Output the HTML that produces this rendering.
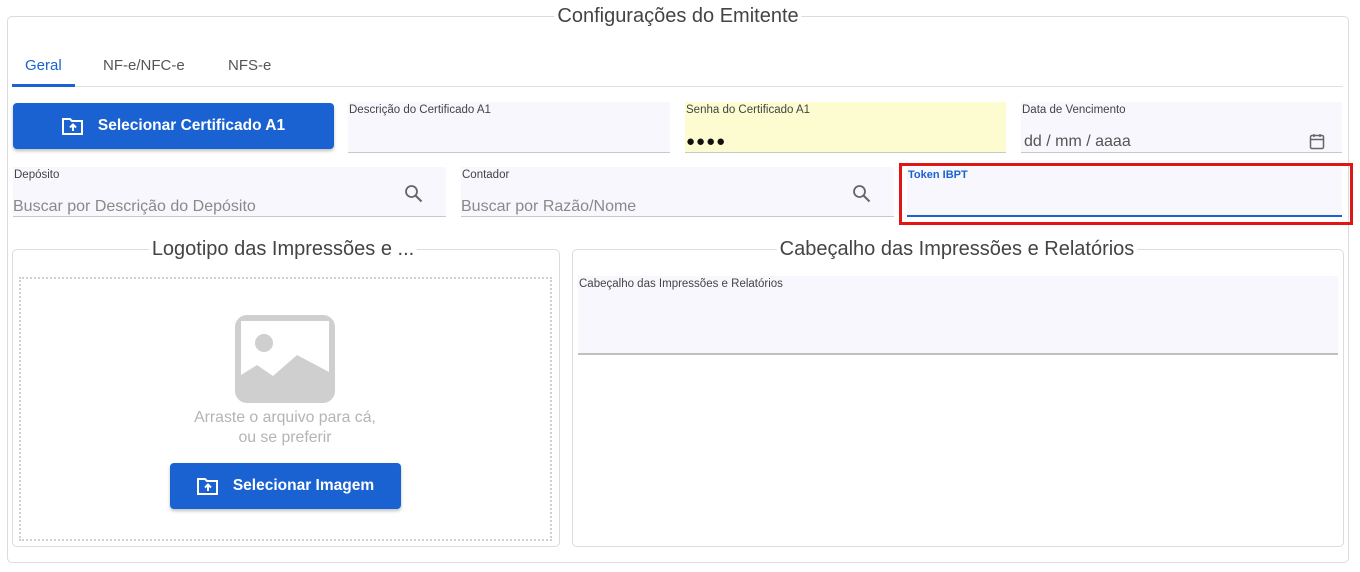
<!DOCTYPE html>
<html><head><meta charset="utf-8"><style>
*{box-sizing:border-box;margin:0;padding:0}
body{width:1360px;height:572px;background:#fff;position:relative;overflow:hidden;font-family:"Liberation Sans",sans-serif;color:#444}
.a{position:absolute}
.box{position:absolute;border:1px solid #dcdcdc;border-radius:5px}
.leg{position:absolute;background:#fff;padding:0 3px;color:#444;font-size:20px;white-space:nowrap;transform:translateX(-50%);line-height:22px}
.fld{position:absolute;background:#f7f7fd;border-bottom:1px solid #c8c8c8}
.lbl{position:absolute;left:1px;top:2px;font-size:11.5px;color:#444}
.ph{position:absolute;left:0;font-size:16px;color:#8a8a8a}
.btn{position:absolute;background:#1a62d2;border-radius:4px;color:#fff;font-size:15.5px;font-weight:bold;box-shadow:0 2px 3px rgba(0,0,0,.25);display:flex;align-items:center;justify-content:center}
</style></head><body>

<div class="box" style="left:7px;top:16px;width:1342px;height:547px"></div>
<div class="leg" style="left:678px;top:5px">Configurações do Emitente</div>

<div class="a" style="left:25px;top:57px;font-size:15px;color:#1a62d2">Geral</div>
<div class="a" style="left:103px;top:57px;font-size:15px;color:#555">NF-e/NFC-e</div>
<div class="a" style="left:228px;top:57px;font-size:15px;color:#555">NFS-e</div>
<div class="a" style="left:12px;top:86px;width:1331px;height:1px;background:#e0e0e0"></div>
<div class="a" style="left:12px;top:84px;width:63px;height:3px;background:#1a62d2"></div>

<div class="btn" style="left:13px;top:103px;width:321px;height:46px">
<svg width="22" height="18" viewBox="0 0 22 18" style="margin-right:14px"><path d="M1 2h7l2 2h10v13H1z" fill="none" stroke="#fff" stroke-width="2"/><path d="M11 14V8M8 10.5l3-3 3 3" stroke="#fff" stroke-width="2" fill="none"/></svg>Selecionar Certificado A1</div>

<div class="fld" style="left:348px;top:102px;width:322px;height:51px"><div class="lbl">Descrição do Certificado A1</div></div>
<div class="fld" style="left:685px;top:102px;width:321px;height:51px;background:#fdfbd0"><div class="lbl">Senha do Certificado A1</div><div class="a" style="left:1px;top:31px;font-size:15px;color:#111;letter-spacing:1px">●●●●</div></div>
<div class="fld" style="left:1021px;top:102px;width:321px;height:51px"><div class="lbl">Data de Vencimento</div><div class="ph" style="left:3px;top:31px;color:#555">dd / mm / aaaa</div>
<svg class="a" style="left:288px;top:31px" width="16" height="17" viewBox="0 0 16 17"><rect x="1.5" y="2.5" width="13" height="13" rx="1.5" fill="none" stroke="#666" stroke-width="1.5"/><path d="M1.5 6.5h13M5 1v3M11 1v3" stroke="#666" stroke-width="1.5"/></svg></div>

<div class="fld" style="left:13px;top:167px;width:433px;height:50px"><div class="lbl">Depósito</div><div class="ph" style="top:31px">Buscar por Descrição do Depósito</div>
<svg class="a" style="left:391px;top:17px" width="20" height="20" viewBox="0 0 20 20"><circle cx="7.5" cy="7.5" r="5.5" fill="none" stroke="#666" stroke-width="1.8"/><path d="M11.5 11.5l6 6" stroke="#666" stroke-width="2"/></svg></div>
<div class="fld" style="left:461px;top:167px;width:433px;height:50px"><div class="lbl">Contador</div><div class="ph" style="top:31px">Buscar por Razão/Nome</div>
<svg class="a" style="left:391px;top:17px" width="20" height="20" viewBox="0 0 20 20"><circle cx="7.5" cy="7.5" r="5.5" fill="none" stroke="#666" stroke-width="1.8"/><path d="M11.5 11.5l6 6" stroke="#666" stroke-width="2"/></svg></div>
<div class="fld" style="left:907px;top:167px;width:435px;height:50px;border-bottom:2px solid #1a62d2"><div class="lbl" style="color:#1a62d2;font-weight:bold;font-size:11px">Token IBPT</div></div>
<div class="a" style="left:899px;top:163px;width:454px;height:62px;border:3px solid #e01515"></div>

<div class="box" style="left:12px;top:249px;width:548px;height:298px"></div>
<div class="leg" style="left:283px;top:238px">Logotipo das Impressões e ...</div>
<div class="a" style="left:19px;top:277px;width:533px;height:264px;border:2px dotted #d0d0d0"></div>
<svg class="a" style="left:235px;top:315px" width="100" height="88" viewBox="0 0 100 88"><rect x="0" y="0" width="100" height="88" rx="12" fill="#cfcfcf"/><rect x="6" y="6" width="88" height="60" fill="#fff"/><circle cx="29" cy="28" r="9" fill="#cfcfcf"/><path d="M6 66L6 60L22 50L38 61L62 40L94 57V76H6z" fill="#cfcfcf"/></svg>
<div class="a" style="left:150px;top:408px;width:270px;text-align:center;font-size:15.8px;color:#b4b4b4;line-height:20px">Arraste o arquivo para cá,<br>ou se preferir</div>
<div class="btn" style="left:170px;top:463px;width:231px;height:46px">
<svg width="22" height="18" viewBox="0 0 22 18" style="margin-right:14px"><path d="M1 2h7l2 2h10v13H1z" fill="none" stroke="#fff" stroke-width="2"/><path d="M11 14V8M8 10.5l3-3 3 3" stroke="#fff" stroke-width="2" fill="none"/></svg>Selecionar Imagem</div>

<div class="box" style="left:572px;top:249px;width:772px;height:298px"></div>
<div class="leg" style="left:957px;top:238px">Cabeçalho das Impressões e Relatórios</div>
<div class="fld" style="left:578px;top:276px;width:760px;height:79px;border-bottom:2px solid #c0c0c0"><div class="lbl">Cabeçalho das Impressões e Relatórios</div></div>

</body></html>
